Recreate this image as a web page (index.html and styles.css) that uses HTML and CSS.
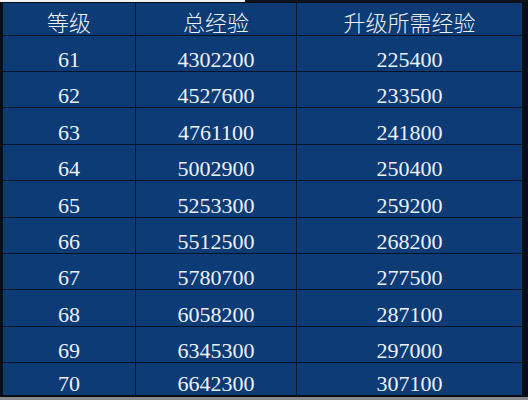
FILE: index.html
```html
<!DOCTYPE html>
<html lang="zh">
<head>
<meta charset="utf-8">
<link rel="stylesheet" href="styles.css">
</head>
<body>
<div class="page">
  <div class="topstrip"><div class="paper"></div></div>
  <div class="frame">
    <div class="grid">
      <div class="cell head">等级</div><div class="cell head">总经验</div><div class="cell head">升级所需经验</div>
      <div class="cell">61</div><div class="cell">4302200</div><div class="cell">225400</div>
      <div class="cell">62</div><div class="cell">4527600</div><div class="cell">233500</div>
      <div class="cell">63</div><div class="cell">4761100</div><div class="cell">241800</div>
      <div class="cell">64</div><div class="cell">5002900</div><div class="cell">250400</div>
      <div class="cell">65</div><div class="cell">5253300</div><div class="cell">259200</div>
      <div class="cell">66</div><div class="cell">5512500</div><div class="cell">268200</div>
      <div class="cell">67</div><div class="cell">5780700</div><div class="cell">277500</div>
      <div class="cell">68</div><div class="cell">6058200</div><div class="cell">287100</div>
      <div class="cell">69</div><div class="cell">6345300</div><div class="cell">297000</div>
      <div class="cell">70</div><div class="cell">6642300</div><div class="cell">307100</div>
    </div>
  </div>
  <div class="bottomstrip"></div>
</div>
</body>
</html>
```
FILE: styles.css
```css
html, body {
  margin: 0;
  padding: 0;
  background: #8a8a8a;
}
.page {
  width: 528px;
  height: 400px;
  display: flex;
  flex-direction: column;
  overflow: hidden;
}
.topstrip {
  height: 2px;
  background: #10151d;
  display: flex;
}
.paper {
  width: 245px;
  background: #f2f2f2;
}
.frame {
  background: #080d16;
  padding: 1px 6px 2px 3px;
}
.grid {
  display: grid;
  grid-template-columns: 132px 160px 225px;
  grid-template-rows: 32px 35px 35px 36px 35px 36px 35px 35px 36px 35px 32px;
  gap: 1px;
  background: #071329;
}
.cell {
  background: #0c3b76;
  color: #eef1f7;
  display: flex;
  align-items: flex-end;
  justify-content: center;
  font-family: "Liberation Serif", "Noto Sans CJK SC", serif;
  font-size: 22px;
  line-height: 1;
}
.head {
  font-family: "Noto Sans CJK SC", sans-serif;
  font-weight: 300;
  font-size: 22px;
  padding-bottom: 3px;
}
.bottomstrip {
  height: 2px;
  background: #8a8a8a;
}
```
